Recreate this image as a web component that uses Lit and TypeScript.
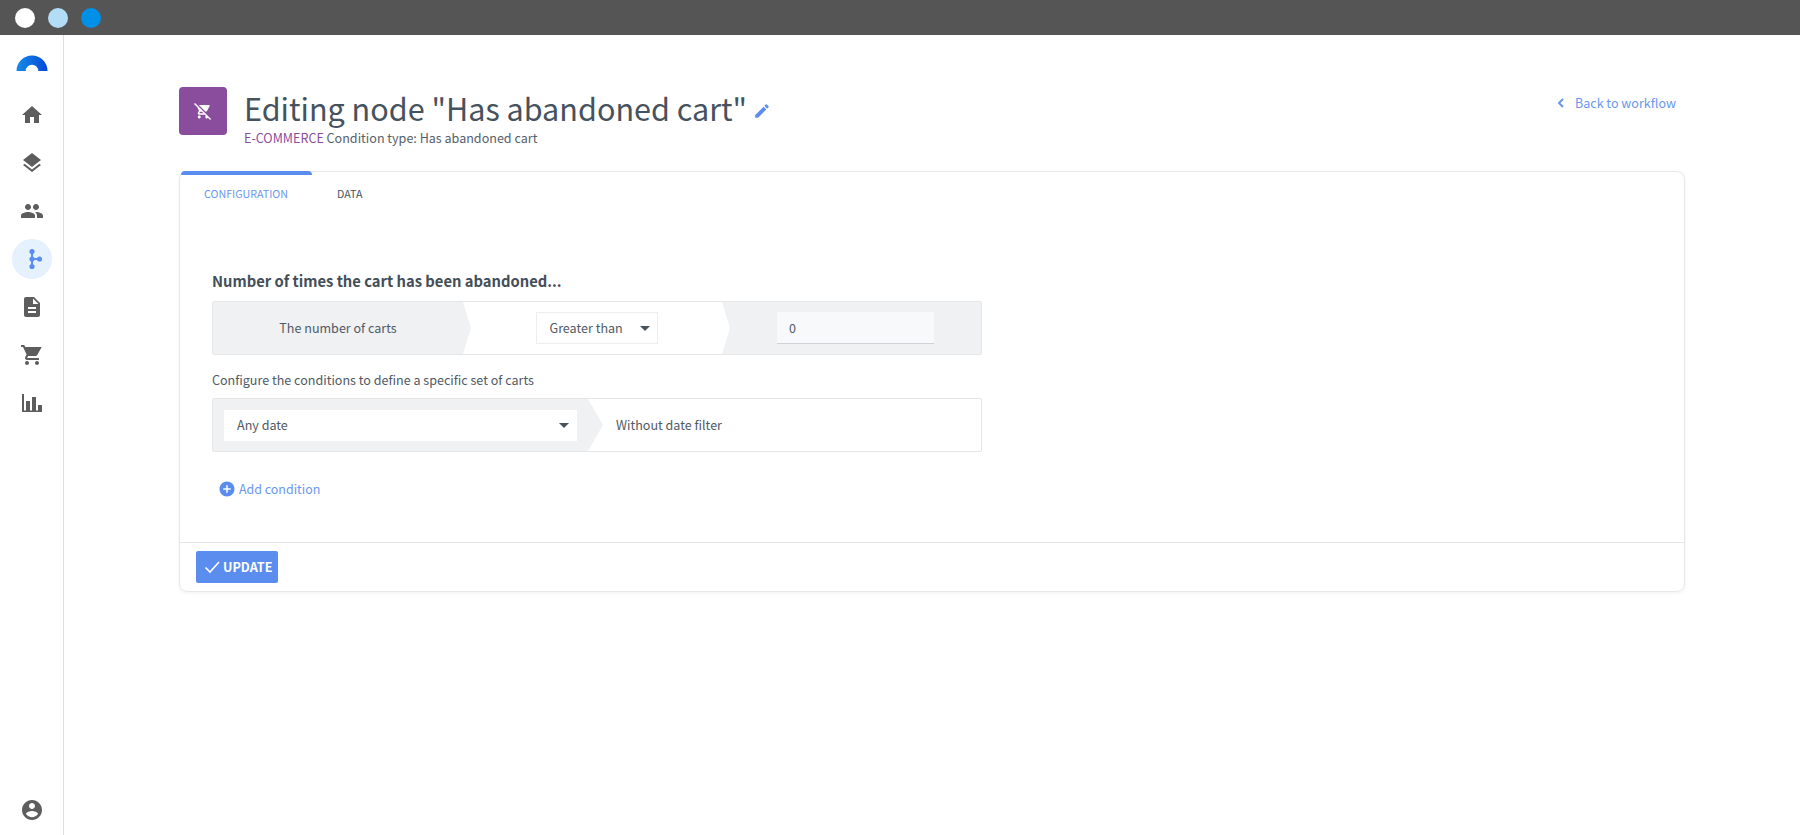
import { LitElement, html, css, svg } from "lit";
import { customElement } from "lit/decorators.js";

const P = {
  home: "M10 20v-6h4v6h5v-8h3L12 3 2 12h3v8z",
  layers: "M11.99 18.54l-7.37-5.73L3 14.07l9 7 9-7-1.63-1.27-7.38 5.74zM12 16l7.36-5.73L21 9l-9-7-9 7 1.63 1.27L12 16z",
  people: "M16 11c1.66 0 2.99-1.34 2.99-3S17.66 5 16 5c-1.66 0-3 1.34-3 3s1.34 3 3 3zm-8 0c1.66 0 2.99-1.34 2.99-3S9.66 5 8 5C6.34 5 5 6.34 5 8s1.34 3 3 3zm0 2c-2.33 0-7 1.17-7 3.5V19h14v-2.5c0-2.33-4.67-3.5-7-3.5zm8 0c-.29 0-.62.02-.97.05 1.16.84 1.97 1.97 1.97 3.45V19h6v-2.5c0-2.33-4.67-3.5-7-3.5z",
  doc: "M14 2H6c-1.1 0-1.99.9-1.99 2L4 20c0 1.1.89 2 1.99 2H18c1.1 0 2-.9 2-2V8l-6-6zm2 16H8v-2h8v2zm0-4H8v-2h8v2zm-3-5V3.5L18.5 9H13z",
  cart: "M7 18c-1.1 0-1.99.9-1.99 2S5.9 22 7 22s2-.9 2-2-.9-2-2-2zM1 2v2h2l3.6 7.59-1.35 2.45c-.16.28-.25.61-.25.96 0 1.1.9 2 2 2h12v-2H7.42c-.14 0-.25-.11-.25-.25l.03-.12.9-1.63h7.45c.75 0 1.41-.41 1.75-1.03L21.7 4H5.21l-.94-2H1zm16 16c-1.1 0-1.99.9-1.99 2s.89 2 1.99 2 2-.9 2-2-.9-2-2-2z",
  chart: "M2 3h2v16.5h18V21H2zM6 10h4v9.5H6zM12 6h4v13.5h-4zM18 14h4v5.5h-4z",
  account: "M12 2C6.48 2 2 6.48 2 12s4.48 10 10 10 10-4.48 10-10S17.52 2 12 2zm0 3c1.66 0 3 1.34 3 3s-1.34 3-3 3-3-1.34-3-3 1.34-3 3-3zm0 14.2c-2.5 0-4.71-1.28-6-3.22.03-1.99 4-3.08 6-3.08 1.99 0 5.97 1.09 6 3.08-1.29 1.94-3.5 3.22-6 3.22z",
  noCart: "M22.73 22.73L2.77 2.77 2 2l-.73-.73L0 2.54l4.39 4.39 2.21 4.66-1.35 2.45c-.16.28-.25.61-.25.96 0 1.1.9 2 2 2h7.46l1.38 1.38c-.5.36-.83.95-.83 1.62 0 1.1.89 2 1.99 2 .67 0 1.26-.33 1.62-.84L21.46 24l1.27-1.27zM7.42 15c-.14 0-.25-.11-.25-.25l.03-.12.9-1.63h2.36l2 2H7.42zm8.13-2c.75 0 1.41-.41 1.75-1.03l3.58-6.49c.08-.14.12-.31.12-.48 0-.55-.45-1-1-1H6.54l9.01 9zM7 18c-1.1 0-1.99.9-1.99 2S5.9 22 7 22s2-.9 2-2-.9-2-2-2z",
  edit: "M3 17.25V21h3.75L17.81 9.94l-3.75-3.75L3 17.25zM20.71 7.04c.39-.39.39-1.02 0-1.41l-2.34-2.34c-.39-.39-1.02-.39-1.41 0l-1.83 1.83 3.75 3.75 1.83-1.83z",
  plus: "M12 2C6.48 2 2 6.48 2 12s4.48 10 10 10 10-4.48 10-10S17.52 2 12 2zm5 11h-4v4h-2v-4H7v-2h4V7h2v4h4v2z",
};

const icon = (d: string, size: number, cls = "") => html`<svg class=${cls} width=${size} height=${size} viewBox="0 0 24 24" fill="currentColor"><path d=${d}></path></svg>`;

@customElement("app-root")
export class AppRoot extends LitElement {
  static styles = css`
    :host { display: block; height: 835px; overflow: hidden; background: #fff; color: #505a64;
      font-family: "Noto Sans CJK SC", "Noto Sans", sans-serif; font-size: 12.55px; line-height: 18px; }
    * { box-sizing: border-box; }
    .titlebar { height: 35px; background: #555; display: flex; align-items: center; gap: 13px; padding-left: 15px; }
    .dot { width: 20px; height: 20px; border-radius: 50%; }
    .layout { display: flex; height: 800px; }
    .side { width: 64px; flex: none; border-right: 1px solid #dedede; display: flex; flex-direction: column; align-items: center; padding: 20px 0 1px; color: #5d5d5d; }
    .logo { height: 16px; margin-bottom: 20px; display: block; flex: none; }
    .nav { width: 40px; height: 48px; display: flex; align-items: center; justify-content: center; flex: none; }
    .nav.active { color: #5b8def; position: relative; }
    .nav.active::before { content: ""; position: absolute; left: 0; top: 4px; width: 40px; height: 40px; border-radius: 50%; background: #e5f1fe; }
    .nav svg { position: relative; }
    .bottom { margin-top: auto; }
    .main { flex: 1; padding: 52px 115px 0 115px; min-width: 0; }
    .head { height: 84px; display: flex; align-items: flex-start; }
    .badge { width: 48px; height: 48px; border-radius: 4px; background: #8a4d9e; color: #fff; display: flex; align-items: center; justify-content: center; flex: none; margin-right: 17px; }
    .titles { flex: 1; margin-top: -2px; }
    .title { display: flex; align-items: center; font-size: 30.55px; line-height: 46px; font-weight: 400; color: #46525d; margin: 0; }
    .title svg { color: #5b8def; margin-left: 6px; margin-top: 5px; }
    .sub { line-height: 18px; margin-top: -2px; color: #56606a; }
    .sub b { font-weight: 400; color: #8a4d9e; }
    .back { display: flex; align-items: center; color: #6b97ee; margin: 7px 9px 0 0; }
    .back svg { margin-right: 10px; }
    .card { height: 421px; border: 1px solid #e7e8ea; border-radius: 8px; box-shadow: 0 1px 4px rgba(0,0,0,.06); display: flex; flex-direction: column; }
    .tabs { display: flex; height: 39px; flex: none; }
    .tab { font-size: 10.7px; line-height: 16px; padding-top: 14px; color: #48535c; }
    .tab.on { width: 131px; margin-top: -1px; margin-left: 1px; padding: 11px 0 0 23px; color: #6b97ee; border-top: 4px solid #5b8def; border-radius: 4px 4px 0 0; height: 40px; }
    .tab.data { margin-left: 25px; }
    .content { flex: 1; padding: 59px 32px 0 32px; }
    .h { font-size: 14.75px; line-height: 22px; font-weight: 700; color: #434e58; margin: 0 0 9px; }
    .row { width: 770px; height: 54px; border: 1px solid #e4e6e8; border-radius: 2px; display: flex; align-items: stretch; background: #fff; }
    .row.gray { background: #f0f1f3; }
    .seg { display: flex; align-items: center; justify-content: center; }
    .s1 { width: 250px; }
    .s2 { width: 267px; background: #fff; clip-path: polygon(0 0, calc(100% - 8px) 0, 100% 50%, calc(100% - 8px) 100%, 0 100%, 8px 50%); }
    .s3 { flex: 1; }
    .s4 { width: 390px; flex: none; background: #f0f1f3; clip-path: polygon(0 0, calc(100% - 15px) 0, 100% 50%, calc(100% - 15px) 100%, 0 100%); justify-content: flex-start; padding-left: 11px; }
    .s5 { flex: 1; justify-content: flex-start; padding-left: 13px; }
    .select { display: flex; align-items: center; justify-content: space-between; background: #fff; border: 1px solid #eceef0; height: 32px; padding: 0 7px 0 13px; }
    .sel1 { width: 122px; }
    .sel2 { width: 353px; height: 31px; border-color: #fff; padding-left: 12px; padding-right: 7px; }
    .caret { width: 0; height: 0; border-left: 5.5px solid transparent; border-right: 5.5px solid transparent; border-top: 5.5px solid #48535c; }
    .input { width: 157px; height: 32px; background: #f8f9fb; border-bottom: 1px solid #cfd3d8; padding: 0 12px; display: flex; align-items: center; }
    .conf { margin: 16px 0 9px; line-height: 18px; }
    .add { display: flex; align-items: center; color: #6b97ee; margin: 28px 0 0 6px; gap: 3px; font-size: 12.45px; }
    .add svg { color: #5b8def; }
    .foot { height: 49px; border-top: 1px solid #e4e6e8; padding: 8px 16px; flex: none; }
    .btn { width: 82px; height: 32px; border-radius: 2px; background: #5b8def; color: #fff; display: flex; align-items: center; padding-left: 8px; gap: 3px; font-weight: 700; font-size: 12.6px; }
  `;

  render() {
    return html`
      <div class="titlebar">
        <span class="dot" style="background:#fff"></span>
        <span class="dot" style="background:#b3dcf7"></span>
        <span class="dot" style="background:#0090e8"></span>
      </div>
      <div class="layout">
        <aside class="side">
          <svg class="logo" width="32" height="16" viewBox="0 0 32 16">
            <defs><linearGradient id="lg" x1="0" x2="1" y1="0" y2="0"><stop offset="0" stop-color="#1a8ce8"></stop><stop offset="1" stop-color="#0048d8"></stop></linearGradient></defs>
            <path d="M.5 16a15.5 15.5 0 0 1 31 0H22.3a6.3 6.3 0 0 0-12.6 0z" fill="url(#lg)"></path>
          </svg>
          <div class="nav">${icon(P.home, 24)}</div>
          <div class="nav">${icon(P.layers, 24)}</div>
          <div class="nav">${icon(P.people, 24)}</div>
          <div class="nav active">
            <svg width="24" height="24" viewBox="0 0 24 24" fill="currentColor">
              ${svg`<rect x="11" y="4" width="2" height="16"></rect><rect x="12" y="11" width="7" height="2"></rect>
              <circle cx="12" cy="4.5" r="2.6"></circle><circle cx="12" cy="12" r="2.6"></circle><circle cx="12" cy="19.5" r="2.6"></circle><circle cx="19.5" cy="12" r="2.6"></circle>`}
            </svg>
          </div>
          <div class="nav">${icon(P.doc, 24)}</div>
          <div class="nav">${icon(P.cart, 24)}</div>
          <div class="nav">${icon(P.chart, 24)}</div>
          <div class="nav bottom">${icon(P.account, 24)}</div>
        </aside>
        <main class="main">
          <header class="head">
            <div class="badge">${icon(P.noCart, 18)}</div>
            <div class="titles">
              <h1 class="title">Editing node "Has abandoned cart"${icon(P.edit, 18)}</h1>
              <div class="sub"><b>E-COMMERCE</b> Condition type: Has abandoned cart</div>
            </div>
            <a class="back"><svg width="8" height="12" viewBox="0 0 8 12" fill="none" stroke="currentColor" stroke-width="2"><path d="M6 2 2 6l4 4"></path></svg>Back to workflow</a>
          </header>
          <section class="card">
            <nav class="tabs">
              <div class="tab on">CONFIGURATION</div>
              <div class="tab data">DATA</div>
            </nav>
            <div class="content">
              <h2 class="h">Number of times the cart has been abandoned...</h2>
              <div class="row gray">
                <div class="seg s1">The number of carts</div>
                <div class="seg s2"><div class="select sel1">Greater than<span class="caret"></span></div></div>
                <div class="seg s3"><div class="input">0</div></div>
              </div>
              <div class="conf">Configure the conditions to define a specific set of carts</div>
              <div class="row">
                <div class="seg s4"><div class="select sel2">Any date<span class="caret"></span></div></div>
                <div class="seg s5">Without date filter</div>
              </div>
              <div class="add">${icon(P.plus, 18)}<span>Add condition</span></div>
            </div>
            <footer class="foot">
              <div class="btn">
                <svg width="16" height="16" viewBox="0 0 16 16" fill="none" stroke="currentColor" stroke-width="1.6"><path d="M1.5 8.5 6 13l9-10"></path></svg>
                UPDATE
              </div>
            </footer>
          </section>
        </main>
      </div>
    `;
  }
}
